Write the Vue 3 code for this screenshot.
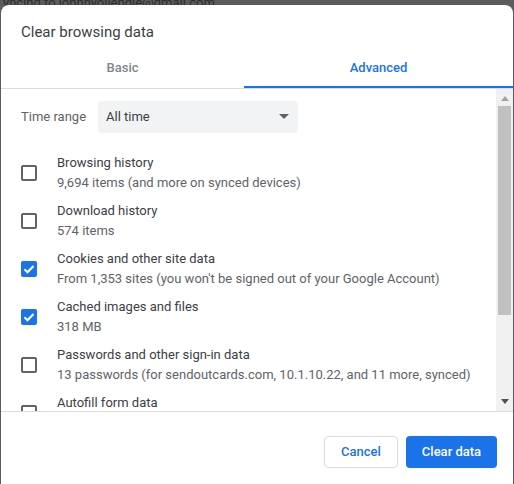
<template>
  <div class="screen">
    <div class="backdrop-text">yncing to johnnyoliendle@gmail.com</div>
    <div class="dialog">
      <div class="title">Clear browsing data</div>
      <div class="tabs">
        <div class="tab basic">Basic</div>
        <div class="tab active">Advanced</div>
      </div>
      <div class="body">
        <div class="scroll-content">
          <div class="range-row">
            <span class="range-label">Time range</span>
            <div class="select">
              <span>All time</span>
              <span class="select-arrow"></span>
            </div>
          </div>
          <div v-for="item in items" :key="item.label" class="row">
            <span class="checkbox" :class="{ checked: item.checked }">
              <svg v-if="item.checked" viewBox="0 0 16 16" width="16" height="16">
                <path d="M3.4 8.2l3.1 3.1 6-6.3" fill="none" stroke="#fff" stroke-width="2.2" />
              </svg>
            </span>
            <div class="row-text">
              <div class="row-label">{{ item.label }}</div>
              <div class="row-sub">{{ item.sub }}</div>
            </div>
          </div>
        </div>
        <div class="scrollbar">
          <span class="arrow-up"></span>
          <div class="thumb"></div>
          <span class="arrow-down"></span>
        </div>
      </div>
      <div class="footer">
        <button class="btn cancel">Cancel</button>
        <button class="btn primary">Clear data</button>
      </div>
    </div>
  </div>
</template>

<script setup>
const items = [
  { label: "Browsing history", sub: "9,694 items (and more on synced devices)", checked: false },
  { label: "Download history", sub: "574 items", checked: false },
  { label: "Cookies and other site data", sub: "From 1,353 sites (you won't be signed out of your Google Account)", checked: true },
  { label: "Cached images and files", sub: "318 MB", checked: true },
  { label: "Passwords and other sign-in data", sub: "13 passwords (for sendoutcards.com, 10.1.10.22, and 11 more, synced)", checked: false },
  { label: "Autofill form data", sub: "", checked: false },
];
</script>

<style>
html,
body {
  margin: 0;
  background: #5c5c5c;
}
</style>

<style scoped>
.screen {
  width: 514px;
  height: 484px;
  background: #5c5c5c;
  font-family: Roboto, "Liberation Sans", sans-serif;
  overflow: hidden;
  display: flex;
  flex-direction: column;
}

.backdrop-text {
  height: 5px;
  padding-left: 3px;
  font-size: 13px;
  line-height: 5px;
  color: #2c2c2c;
  white-space: nowrap;
  overflow: hidden;
  flex-shrink: 0;
}

.dialog {
  flex: 1;
  min-height: 0;
  margin-left: 1px;
  margin-right: 1px;
  background: #fff;
  border-radius: 8px 8px 0 0;
  display: flex;
  flex-direction: column;
  overflow: hidden;
}

.title {
  height: 38px;
  padding: 12px 0 0 20px;
  box-sizing: border-box;
  font-size: 15px;
  line-height: 30px;
  color: #3c4043;
  flex-shrink: 0;
}

.tabs {
  display: flex;
  height: 45px;
  border-bottom: 1px solid #dadce0;
  flex-shrink: 0;
  box-sizing: content-box;
}

.tab {
  flex: 1;
  height: 45px;
  text-align: center;
  font-size: 13px;
  font-weight: 500;
  line-height: 50px;
  color: #80868b;
  box-sizing: border-box;
}

.tab.basic {
  flex: 0 0 243px;
}

.tab.active {
  color: #1a73e8;
  border-bottom: 2px solid #1a73e8;
}

.body {
  height: 322px;
  display: flex;
  overflow: hidden;
  flex-shrink: 0;
  border-bottom: 1px solid #dadce0;
}

.scroll-content {
  flex: 1;
  min-width: 0;
  overflow: hidden;
}

.range-row {
  display: flex;
  align-items: center;
  height: 32px;
  margin-top: 12px;
  margin-bottom: 16px;
  padding-left: 20px;
}

.range-label {
  width: 77px;
  padding-bottom: 2px;
  font-size: 13px;
  color: #5f6368;
}

.select {
  width: 200px;
  height: 32px;
  padding: 0 9px 2px 8px;
  box-sizing: border-box;
  display: flex;
  align-items: center;
  justify-content: space-between;
  background: #f1f3f4;
  border-radius: 4px;
  font-size: 13px;
  color: #3c4043;
}

.select-arrow {
  width: 0;
  height: 0;
  border-left: 5px solid transparent;
  border-right: 5px solid transparent;
  border-top: 5px solid #5f6368;
}

.row {
  display: flex;
  align-items: center;
  height: 48px;
  padding-left: 20px;
}

.checkbox {
  width: 16px;
  height: 16px;
  border: 2px solid #5f6368;
  border-radius: 2px;
  box-sizing: border-box;
  flex-shrink: 0;
  margin-right: 20px;
  display: flex;
  align-items: center;
  justify-content: center;
}

.checkbox.checked {
  background: #1a73e8;
  border-color: #1a73e8;
}

.checkbox svg {
  flex-shrink: 0;
}

.row-text {
  min-width: 0;
}

.row-label {
  font-size: 13px;
  line-height: 20px;
  color: #3c4043;
  white-space: nowrap;
}

.row-sub {
  min-height: 20px;
  font-size: 13px;
  line-height: 20px;
  color: #5f6368;
  white-space: nowrap;
}

.scrollbar {
  width: 17px;
  background: #f1f1f1;
  display: flex;
  flex-direction: column;
  align-items: center;
  flex-shrink: 0;
}

.arrow-up {
  width: 0;
  height: 0;
  margin: 7px 0 5px;
  border-left: 4px solid transparent;
  border-right: 4px solid transparent;
  border-bottom: 5px solid #a3a3a3;
}

.thumb {
  width: 13px;
  height: 209px;
  background: #c1c1c1;
}

.arrow-down {
  width: 0;
  height: 0;
  margin-top: auto;
  margin-bottom: 7px;
  border-left: 4px solid transparent;
  border-right: 4px solid transparent;
  border-top: 5px solid #505050;
}

.footer {
  flex: 1;
  display: flex;
  justify-content: flex-end;
  align-items: flex-start;
  gap: 8px;
  padding: 24px 16px 0 0;
}

.btn {
  height: 32px;
  padding: 0 0 2px;
  border-radius: 4px;
  font-family: inherit;
  font-size: 13px;
  font-weight: 500;
  box-sizing: border-box;
}

.cancel {
  width: 74px;
  background: #fff;
  border: 1px solid #dadce0;
  color: #1a73e8;
}

.primary {
  width: 91px;
  background: #1a73e8;
  border: none;
  color: #fff;
}
</style>
